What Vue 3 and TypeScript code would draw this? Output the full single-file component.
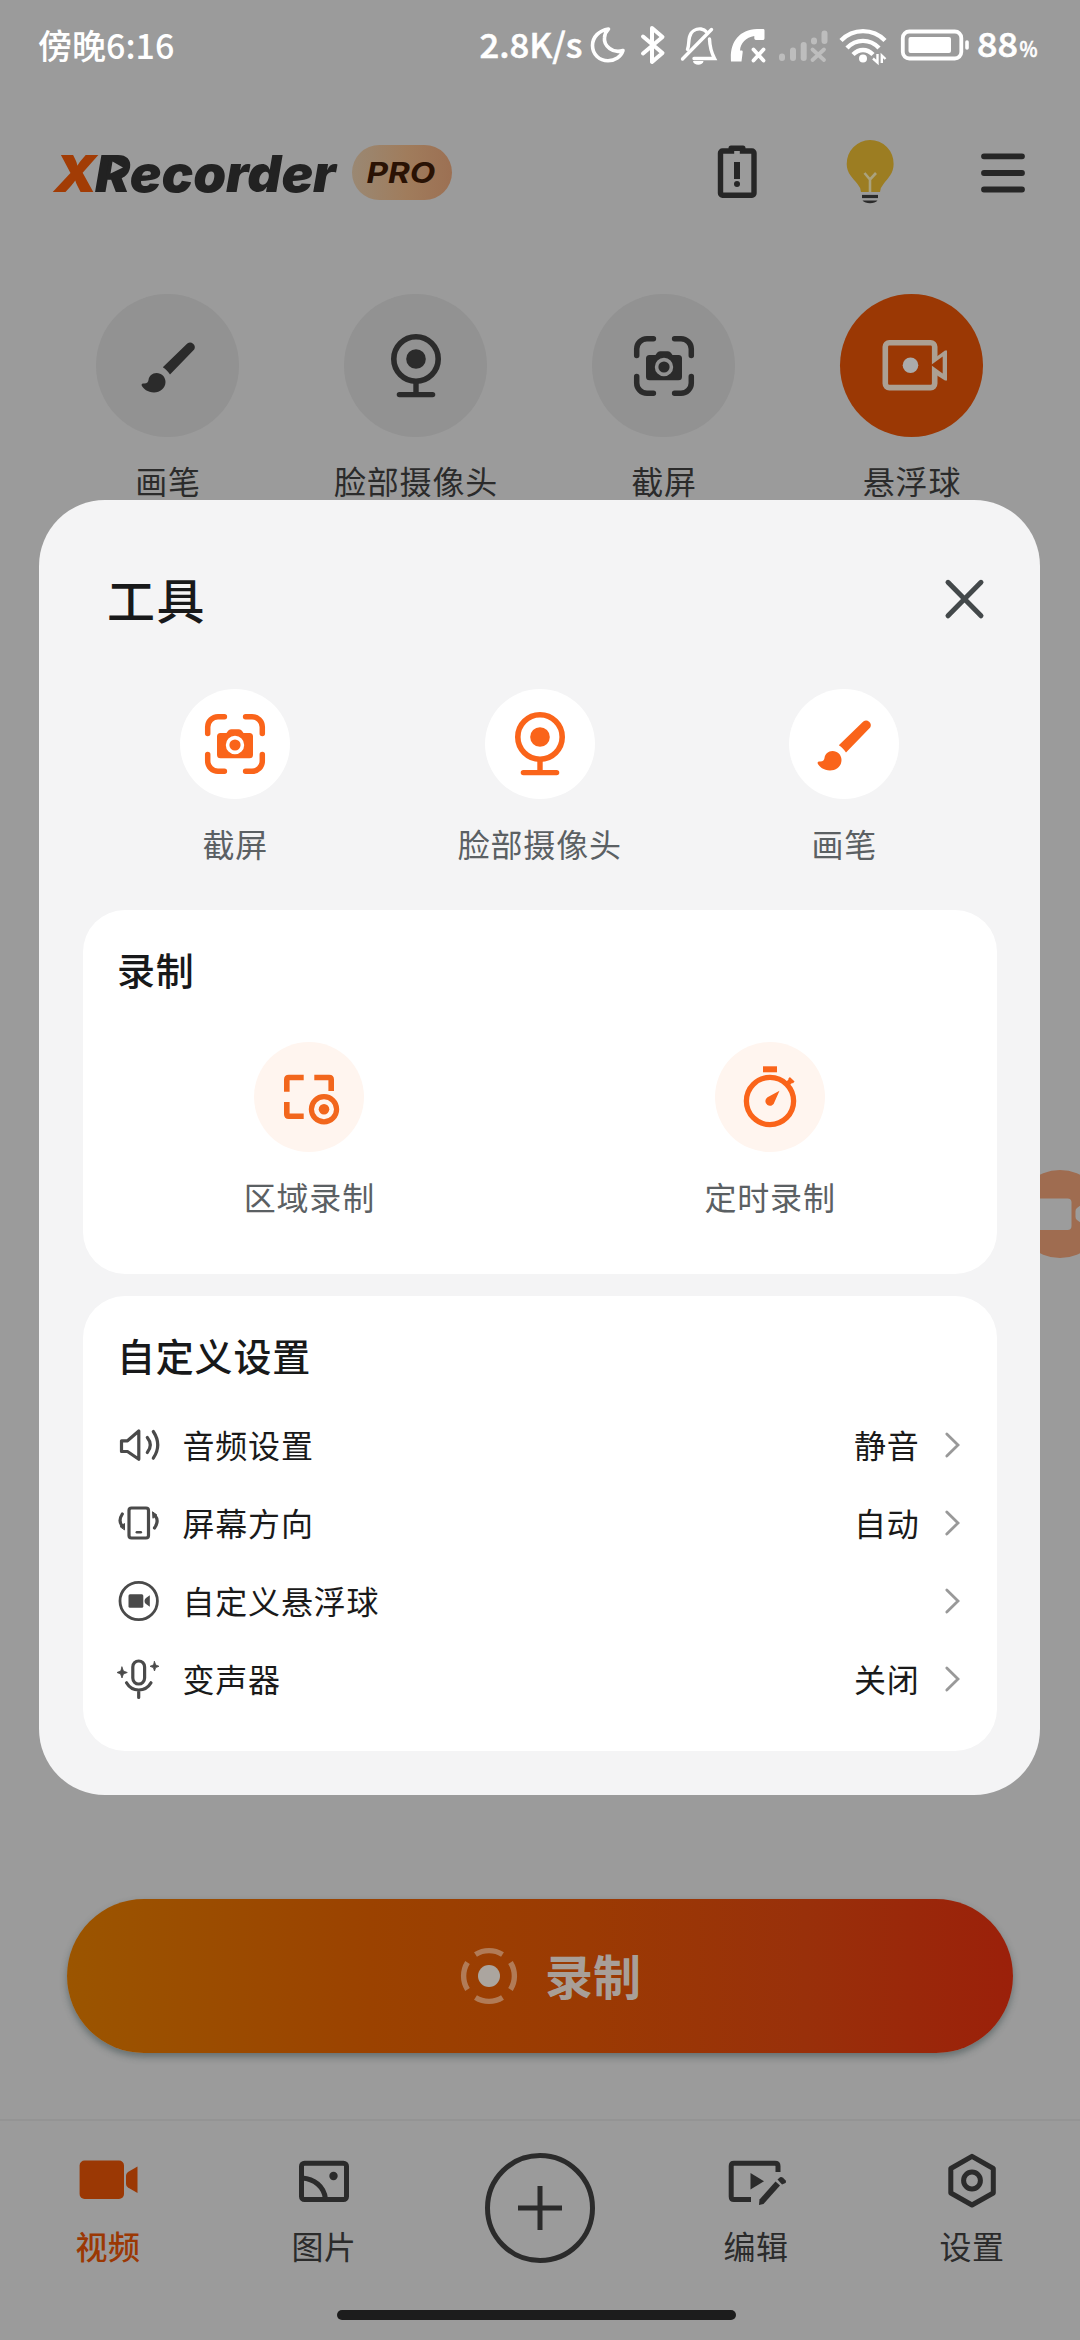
<script setup lang="ts">
type IconName = 'brush' | 'webcam' | 'capture' | 'float'

interface Tool {
  icon: IconName
  label: string
  active?: boolean
}

interface SettingRow {
  icon: 'audio' | 'rotate' | 'ball' | 'voice'
  label: string
  value: string
}

const homeTools: Tool[] = [
  { icon: 'brush', label: '画笔' },
  { icon: 'webcam', label: '脸部摄像头' },
  { icon: 'capture', label: '截屏' },
  { icon: 'float', label: '悬浮球', active: true },
]

const dialogTools: Tool[] = [
  { icon: 'capture', label: '截屏' },
  { icon: 'webcam', label: '脸部摄像头' },
  { icon: 'brush', label: '画笔' },
]

const settings: SettingRow[] = [
  { icon: 'audio', label: '音频设置', value: '静音' },
  { icon: 'rotate', label: '屏幕方向', value: '自动' },
  { icon: 'ball', label: '自定义悬浮球', value: '' },
  { icon: 'voice', label: '变声器', value: '关闭' },
]
</script>

<template>
  <div class="screen">
    <!-- shared glyphs -->
    <svg class="defs" width="0" height="0">
      <symbol id="i-capture" viewBox="-5 -5 70 70">
        <g fill="none" stroke="currentColor" stroke-width="5.5" stroke-linecap="round">
          <path d="M19.4 2.7H13A10.3 10.3 0 0 0 2.7 13V19.4" />
          <path d="M40.6 2.7H47A10.3 10.3 0 0 1 57.3 13V19.4" />
          <path d="M19.4 57.3H13A10.3 10.3 0 0 1 2.7 47V40.6" />
          <path d="M40.6 57.3H47A10.3 10.3 0 0 0 57.3 47V40.6" />
        </g>
        <path fill="currentColor" fill-rule="evenodd" d="M15.5 19H21.5C23 17 24 15.3 26.5 15.3H33.5C36 15.3 37 17 38.5 19H44.5A3.5 3.5 0 0 1 48 22.5V40.8A3.5 3.5 0 0 1 44.5 44.3H15.5A3.5 3.5 0 0 1 12 40.8V22.5A3.5 3.5 0 0 1 15.5 19ZM30 21.8A9.2 9.2 0 1 0 30 40.2A9.2 9.2 0 1 0 30 21.8Z" />
        <circle cx="30" cy="31" r="5.6" fill="currentColor" />
      </symbol>
      <symbol id="i-webcam" viewBox="-5 -3 70 70">
        <circle cx="30" cy="25" r="22.2" fill="none" stroke="currentColor" stroke-width="5.6" />
        <circle cx="30" cy="25" r="9.8" fill="currentColor" />
        <path d="M30 48V60M13.4 60.6H46.6" fill="none" stroke="currentColor" stroke-width="5.4" stroke-linecap="round" />
      </symbol>
      <symbol id="i-brush" viewBox="-8.5 -10.5 70 70">
        <path fill="currentColor" d="M21.3 25.8L45.8 2A4.7 4.7 0 0 1 52.7 8L28.5 32.9C26.3 29.8 24.5 27.8 21.3 25.8Z" />
        <path fill="currentColor" d="M0 43.6C0 42.6.8 42 2 42C5.5 42.3 6.8 40.5 7 38.5C7.5 34.5 10.8 31.6 15 31.6C20 31.6 24 35.4 24 40.6C24 47 18.5 51 12.5 51C6.2 51 1.6 47.6 0 43.6Z" />
      </symbol>
      <symbol id="i-float" viewBox="-5.5 -9 70 70">
        <rect x="2.8" y="2.8" width="49.4" height="44.8" rx="4" fill="none" stroke="#aca093" stroke-width="5.6" />
        <path fill="#aca093" d="M53 17.5L62.5 10.5H66V40.5H62.5L53 34.5Z" />
        <path fill="#9b3804" d="M48.5 25L60.2 16.5V33.6Z" />
        <circle cx="28" cy="25.3" r="7.8" fill="#ababab" />
      </symbol>
    </svg>

    <header class="status">
      <span class="time">傍晚6:16</span>
      <svg class="speed" width="104" height="36" viewBox="479 28 104 36">
        <text x="479.5" y="58" font-size="34" textLength="103" lengthAdjust="spacingAndGlyphs" fill="#fff" stroke="#fff" stroke-width="0.5">2.8K/s</text>
      </svg>
      <svg class="moon" width="36" height="38" viewBox="590 26 36 38" fill="none" stroke="#fff" stroke-width="3.6" stroke-linejoin="round">
        <path d="M608.5 29C599 30.5 592.5 37 592.5 45.5C592.5 54.5 599.5 60.7 608 60.7C615 60.7 621 56.8 623 50.5C613 54 603.5 46 604.5 37.5C604.8 34 606 31.5 608.5 29Z" />
      </svg>
      <svg class="bt" width="26" height="40" viewBox="640 25 26 40" fill="none" stroke="#fff" stroke-width="4" stroke-linejoin="round" stroke-linecap="round">
        <path d="M643 36.5L662.500 53L652 62V28L662.5 37L643 53.5" />
      </svg>
      <svg class="bell" width="36" height="40" viewBox="681 26 36 40" fill="none" stroke="#fff" stroke-width="3.4" stroke-linecap="round">
        <path d="M682.5 59L711.5 29.5" />
        <path d="M687.5 49.5C689 46 688.5 41 689.5 37C691 31 696 28.500 701 29C703 29.3 705 30 706 31.5" />
        <path d="M709.5 39C709.8 47 710.5 51 714.5 58.5H694" />
        <path fill="#fff" stroke="none" d="M693 61H703.5C703 66 693.5 66 693 61Z" />
      </svg>
      <svg class="call" width="35" height="35" viewBox="731 28 35 35">
        <path fill="#fff" d="M731 61.5C729.5 43 738 30 757 29H763C764 29 764.5 29.5 764.5 30.5V38C764.5 39.5 764 40 762.5 40H757C755.5 40 754.5 39.5 754.3 38.5V36C746 37.5 740.5 43 740 50.5H741.5C742.3 50.5 742.8 51 742.7 52L741.5 61.5Z" />
        <path d="M753.5 49.5L763.5 60.5M763.5 49.5L753.5 60.5" stroke="#fff" stroke-width="3.8" stroke-linecap="round" />
      </svg>
      <svg class="signal" width="50" height="34" viewBox="779 29 50 34" stroke="#bdbdbd" stroke-width="6" stroke-linecap="round">
        <path d="M782 58V56.5M793 58V50.5M803.7 58V45M814 41.5V40.500M824.5 41V33.500" />
        <path d="M812.5 49.5L824 60M824 49.5L812.5 60" stroke-width="3.8" />
      </svg>
      <svg class="wifi" width="48" height="36" viewBox="839 28 48 36" fill="none" stroke="#fff" stroke-width="4.4">
        <path d="M841 40.5C853 28 873 28 885 40.5" />
        <path d="M847 48C856 38.5 870 38.5 879 48" />
        <path d="M853 54.5C859 48.5 867 48.5 873 54.5" />
        <circle cx="863" cy="58.5" r="4" fill="#fff" stroke="none" />
        <path d="M877.500 54V62.500L873 58.500M881.8 63V55.5L885.5 59" stroke-width="2.4" />
      </svg>
      <svg class="battery" width="69" height="32" viewBox="901 29 69 32">
        <rect x="902.8" y="31.5" width="58.5" height="27" rx="6.5" fill="none" stroke="#fff" stroke-width="3.8" />
        <rect x="908.5" y="37" width="42.5" height="16" rx="2" fill="#fff" />
        <path d="M967 42V48" stroke="#fff" stroke-width="3.6" stroke-linecap="round" />
      </svg>
      <svg class="pct" width="62" height="36" viewBox="977 28 62 36" fill="#fff" stroke="#fff" stroke-width="0.6">
        <text x="977" y="57" font-size="34" textLength="41" lengthAdjust="spacingAndGlyphs">88</text>
        <text x="1019.5" y="57" font-size="22" textLength="18" lengthAdjust="spacingAndGlyphs">%</text>
      </svg>
    </header>

    <div class="topbar">
      <svg class="logo" width="288" height="56" viewBox="52 145 288 56">
        <text x="54" y="192" font-size="51" class="logo-t" fill="#a23c05" textLength="43" lengthAdjust="spacingAndGlyphs">X</text>
        <text x="95" y="192" font-size="51" class="logo-t" fill="#222" textLength="241" lengthAdjust="spacingAndGlyphs">Recorder</text>
        <path d="M109 160H125L123 176H106Z" fill="#222" />
        <path d="M112.5 161.500L123 167.500L110.5 173.500Z" fill="#9b9b9b" />
      </svg>
      <span class="pro">
        <svg width="72" height="26" viewBox="366 160 72 26">
          <text x="366.5" y="183" font-size="29" class="pro-t" textLength="69" lengthAdjust="spacingAndGlyphs">PRO</text>
        </svg>
      </span>
      <svg class="batt-icon" width="40" height="54" viewBox="717 145 40 54">
        <path d="M723.5 150.5H728.5V148Q728.5 145.5 731 145.5H743Q745.5 145.5 745.5 148V150.5H751" fill="#262626" />
        <rect x="720.5" y="151" width="33.5" height="44.3" rx="2" fill="none" stroke="#262626" stroke-width="5.4" />
        <rect x="734.2" y="151" width="5.6" height="4" fill="#9b9b9b" />
        <path d="M737 162V179" stroke="#262626" stroke-width="6" />
        <circle cx="737" cy="184" r="3" fill="#262626" />
      </svg>
      <svg class="bulb" width="48" height="64" viewBox="846 140 48 64">
        <path fill="#9c7d22" d="M870 140A23.5 23.5 0 0 1 893.6 164C893.6 173.5 888 178 883.5 184Q880 188 880 192H861Q861 188 857.5 184C853 178 846.7 173.5 846.7 164A23.5 23.5 0 0 1 870 140Z" />
        <path d="M864.5 173L870 179.5L876 173M870 179.5V192" fill="none" stroke="#aaa27e" stroke-width="2.6" />
        <path d="M862 196.5H878" stroke="#2a2a2a" stroke-width="3.2" />
        <path d="M862.5 200.5H877.5Q875 203.3 870 203.3Q865 203.3 862.5 200.5Z" fill="#2a2a2a" />
      </svg>
      <svg class="menu" width="44" height="40" viewBox="981 153 44 40" stroke="#262626" stroke-width="5.8" stroke-linecap="round">
        <path d="M984 156.3H1022M984 173H1022M984 189.5H1022" />
      </svg>
    </div>

    <nav class="home-tools">
      <div v-for="t in homeTools" :key="t.label" class="tool">
        <span class="disc" :class="{ active: t.active }">
          <svg width="70" height="70"><use :href="`#i-${t.icon}`" /></svg>
        </span>
        <span class="label">{{ t.label }}</span>
      </div>
    </nav>

    <div class="spacer"></div>

    <button class="record">
      <svg width="56" height="56" viewBox="-28 -28 56 56">
        <g fill="none" stroke="#b17b57" stroke-width="5.4">
          <path d="M-13.5 -21.5A25.4 25.4 0 0 1 13.5 -21.5" />
          <path d="M21.5 -13.5A25.4 25.4 0 0 1 21.5 13.5" />
          <path d="M13.5 21.5A25.4 25.4 0 0 1 -13.5 21.5" />
          <path d="M-21.5 13.5A25.4 25.4 0 0 1 -21.5 -13.5" />
        </g>
        <circle r="11" fill="#aba59f" />
      </svg>
      <span>录制</span>
    </button>

    <footer class="tabs">
      <div class="tab on">
        <svg width="60" height="56" viewBox="79 2153 60 56">
          <rect x="80.6" y="2160.5" width="44.4" height="38.5" rx="5" fill="#9b3804" />
          <path fill="#9b3804" d="M127 2175.5Q127 2173.5 129 2172L138.5 2166.5V2193L129 2187.5Q127 2186 127 2184Z" />
        </svg>
        <span>视频</span>
      </div>
      <div class="tab">
        <svg width="60" height="56" viewBox="294 2153 60 56" fill="none" stroke="#2b2b2b" stroke-width="5">
          <rect x="301.5" y="2163.2" width="45" height="36.3" rx="3" />
          <path d="M302 2178C314 2179 324 2186 325.5 2199" />
          <circle cx="333.5" cy="2176" r="4.2" fill="#2b2b2b" stroke="none" />
        </svg>
        <span>图片</span>
      </div>
      <div class="tab add">
        <svg width="112" height="112" viewBox="-56 -56 112 112" fill="none" stroke="#2b2b2b" stroke-width="5">
          <circle r="52.5" />
          <path d="M-22 0H22M0 -22V22" />
        </svg>
      </div>
      <div class="tab">
        <svg width="60" height="56" viewBox="726 2153 60 56" fill="none" stroke="#2b2b2b" stroke-width="5">
          <path d="M778 2172V2166Q778 2163.2 775 2163.2H734Q731.2 2163.2 731.2 2166V2196.5Q731.2 2199.5 734 2199.5H751" />
          <path d="M750.5 2173L764 2181.3L750.5 2189.5Z" fill="#2b2b2b" stroke="none" />
          <path fill="#2b2b2b" stroke="none" d="M759.5 2199.5L775.5 2181.5L780 2185.5L763.5 2204L759 2205Z" />
          <path fill="#2b2b2b" stroke="none" d="M777.5 2179.5L780 2177.2Q781.5 2176.5 783 2177.8L785.7 2180.5Q786.5 2182 785.5 2183L782 2184.5Z" />
        </svg>
        <span>编辑</span>
      </div>
      <div class="tab">
        <svg width="60" height="56" viewBox="942 2152.5 60 56" fill="none" stroke="#2b2b2b" stroke-width="5" stroke-linejoin="round">
          <path d="M972 2155.8L993.3 2168V2192.5L972 2204.5L950.8 2192.5V2168Z" />
          <circle cx="972" cy="2180" r="8.4" />
        </svg>
        <span>设置</span>
      </div>
      <i class="home-bar"></i>
    </footer>

    <div class="floating">
      <svg width="64" height="88" viewBox="1016 1170 64 88">
        <circle cx="1060" cy="1214" r="44" fill="#9f6c50" />
        <rect x="1030" y="1198.5" width="41.5" height="31.5" rx="4" fill="#9c9c9c" />
        <path d="M1075.5 1211Q1075.5 1209 1077 1208L1084 1203V1225L1077 1220Q1075.5 1219 1075.5 1217Z" fill="#9c9c9c" />
      </svg>
    </div>

    <section class="dialog">
      <div class="dialog-head">
        <h2>工具</h2>
        <svg width="40" height="40" viewBox="943 579 40 40" stroke="#43484a" stroke-width="5" stroke-linecap="round">
          <path d="M947 582.3L980 615.8M980 582.3L947 615.8" />
        </svg>
      </div>

      <div class="dialog-tools">
        <div v-for="t in dialogTools" :key="t.label" class="tool">
          <span class="disc"><svg width="70" height="70"><use :href="`#i-${t.icon}`" /></svg></span>
          <span class="label">{{ t.label }}</span>
        </div>
      </div>

      <div class="card rec-card">
        <h3>录制</h3>
        <div class="rec-row">
          <div class="tool">
            <span class="disc">
              <svg width="66" height="66" viewBox="276 1064 66 66" fill="none" stroke="#f2661c" stroke-width="5.6">
                <path d="M303.7 1077.5H288.8Q286.8 1077.5 286.8 1079.5V1091.7" />
                <path d="M314.3 1077.5H329.2Q331.2 1077.5 331.2 1079.5V1091" />
                <path d="M303.7 1116.3H288.8Q286.8 1116.3 286.8 1114.3V1102" />
                <circle cx="324" cy="1109.3" r="12.6" stroke-width="5.2" />
                <circle cx="324" cy="1109.3" r="5.3" fill="#f2661c" stroke="none" />
              </svg>
            </span>
            <span class="label">区域录制</span>
          </div>
          <div class="tool">
            <span class="disc">
              <svg width="66" height="66" viewBox="737 1064 66 66" fill="none" stroke="#fa641a" stroke-width="5.3">
                <circle cx="770" cy="1101" r="23.6" />
                <path d="M763 1069.3H777" stroke-width="6" />
                <path d="M786.5 1085L791.5 1080" stroke-width="5" />
                <path d="M789 1078L793.7 1082.5" stroke-width="2.5" />
                <path d="M779.5 1090.8L774.5 1102A4.6 4.6 0 1 1 767.5 1097.3Z" fill="#fa641a" stroke="none" />
              </svg>
            </span>
            <span class="label">定时录制</span>
          </div>
        </div>
      </div>

      <div class="card set-card">
        <h3>自定义设置</h3>
        <div v-for="s in settings" :key="s.label" class="row">
          <svg class="row-icon" width="42" height="42" viewBox="0 0 42 42" fill="none" stroke="#4a4a4a" stroke-width="3.2" stroke-linecap="round" stroke-linejoin="round">
            <template v-if="s.icon === 'audio'">
              <path d="M3.5 16.8H9.5L20.8 7V35.3L9.5 27.5H3.5Z" />
              <path d="M29.3 13.5Q35.3 21 29.3 28.5M35.3 7.5Q44.2 21 35.3 34.2" />
            </template>
            <template v-else-if="s.icon === 'rotate'">
              <rect x="11" y="6" width="19.5" height="30" rx="2.5" />
              <path d="M18.8 30.2H22.8" stroke-width="2.5" />
              <path d="M4.3 12Q-.2 19 4.3 24M37 13.5Q41.5 19 36.5 26" />
              <path d="M2.5 24.5L6.5 21.5V27.5ZM34.8 10L38.8 13L35.2 16Z" fill="#4a4a4a" stroke-width="1" />
            </template>
            <template v-else-if="s.icon === 'ball'">
              <circle cx="20.7" cy="21" r="18.7" stroke-width="2.8" />
              <rect x="10.5" y="14.2" width="14.8" height="13.5" rx="1.5" fill="#4a4a4a" stroke="none" />
              <path d="M26.6 20.5Q26.6 19 28 18L31.8 15.3V26.7L28 24Q26.6 23 26.6 21.5Z" fill="#4a4a4a" stroke="none" />
            </template>
            <template v-else>
              <rect x="14.8" y="3" width="11.8" height="23" rx="5.9" />
              <path d="M8.5 24.8C11.5 30 15.5 32 20.7 32S30 30 33 24.8M20.7 32V39.5" />
              <path d="M4 9L5.4 13L9.3 14.5L5.4 16L4 20L2.6 16L-1 14.5L2.6 13ZM36.5 3.5L37.7 7L41 8.3L37.7 9.6L36.5 13L35.3 9.6L32 8.3L35.3 7Z" fill="#4a4a4a" stroke="#4a4a4a" stroke-width="0.8" />
            </template>
          </svg>
          <span class="name">{{ s.label }}</span>
          <span class="value">{{ s.value }}</span>
          <svg width="15" height="26" viewBox="0 0 15 26" fill="none" stroke="#999" stroke-width="2.8" stroke-linecap="round">
            <path d="M1.8 2L13 13L1.8 24" />
          </svg>
        </div>
      </div>
    </section>
  </div>
</template>

<style>
body {
  margin: 0;
  background: #9b9b9b;
}
</style>

<style scoped>
.screen {
  position: relative;
  width: 1080px;
  height: 2340px;
  display: flex;
  flex-direction: column;
  overflow: hidden;
  background: #9b9b9b;
  color: #2b2b2b;
  font-family: 'Noto Sans CJK SC', 'Noto Sans', sans-serif;
  font-size: 32px;
}
svg {
  display: block;
  flex: none;
  overflow: visible;
}
.defs {
  position: absolute;
}
.status {
  height: 92px;
  display: flex;
  align-items: center;
  color: #fff;
  font-weight: 500;
  box-sizing: border-box;
  padding-left: 38px;
}
.time {
  width: 441px;
  font-size: 34px;
  line-height: 40px;
  margin-top: -3px;
  white-space: nowrap;
}
.moon { margin-left: 7px; margin-top: -2px; }
.bt { margin-left: 14px; margin-top: -2px; }
.bell { margin-left: 15px; }
.call { margin-left: 14px; margin-top: -1px; }
.signal { margin-left: 13px; }
.wifi { margin-left: 10px; }
.battery { margin-left: 14px; margin-top: -2px; }
.pct { margin-left: 7px; }
.topbar {
  height: 160px;
  display: flex;
  align-items: center;
  padding-left: 52px;
}
.logo-t {
  font-family: Inter, 'Open Sans', sans-serif;
  font-weight: 900;
  font-style: italic;
}
.logo { margin-top: 2px; }
.pro {
  width: 100px;
  height: 55px;
  margin-left: 12px;
  margin-top: 1px;
  border-radius: 28px;
  background: linear-gradient(90deg, #9a8873, #a07c5c 55%, #9c7053);
  display: flex;
  align-items: center;
  justify-content: center;
}
.pro-t {
  font-family: Inter, 'Open Sans', sans-serif;
  font-weight: 700;
  font-style: italic;
  fill: #2a1204;
}
.batt-icon { margin-left: 265px; }
.bulb { margin-left: 89px; }
.menu { margin-left: 87px; margin-top: 2px; }
.home-tools {
  display: flex;
  margin: 42px 0 0 43.5px;
}
.tool {
  display: flex;
  flex-direction: column;
  align-items: center;
}
.home-tools .tool {
  width: 248px;
}
.disc {
  display: flex;
  align-items: center;
  justify-content: center;
  border-radius: 50%;
}
.home-tools .disc {
  width: 143px;
  height: 143px;
  background: #929292;
}
.home-tools .disc.active {
  background: #9b3804;
}
.label {
  line-height: 40px;
  letter-spacing: 0.8px;
  white-space: nowrap;
}
.home-tools .label {
  margin-top: 23px;
  padding-left: 1px;
}
.spacer {
  flex: 1;
}
.record {
  width: 946px;
  height: 154px;
  margin: 0 0 66px 67px;
  padding: 0 0 0 22px;
  border: 0;
  border-radius: 77px;
  background: linear-gradient(90deg, #9b5500, #9b4200 32%, #9b3a03 55%, #99300a 78%, #9b200a);
  box-shadow: 0 4px 7px rgba(40, 60, 60, 0.45);
  display: flex;
  align-items: center;
  justify-content: center;
  gap: 28px;
  font: 700 48px/60px 'Noto Sans CJK SC', sans-serif;
  color: #a89f98;
}
.record span {
  margin-top: -4px;
}
.tabs {
  position: relative;
  height: 221px;
  box-sizing: border-box;
  border-top: 2px solid #949494;
  display: flex;
}
.tab {
  width: 216px;
  display: flex;
  flex-direction: column;
  align-items: center;
  padding-top: 32px;
  box-sizing: border-box;
}
.tab span {
  margin-top: 16px;
  line-height: 40px;
  letter-spacing: 0.6px;
}
.tab.on {
  color: #9b3804;
  font-weight: 500;
}
.tab.add {
  padding-top: 31px;
}
.home-bar {
  position: absolute;
  left: 337px;
  top: 189px;
  width: 399px;
  height: 10px;
  border-radius: 5px;
  background: #1c1c1c;
}
.floating {
  position: absolute;
  left: 1016px;
  top: 1170px;
}
.dialog {
  position: absolute;
  left: 39px;
  top: 500px;
  width: 1001px;
  height: 1295px;
  box-sizing: border-box;
  padding: 69px 43.5px 0 44px;
  border-radius: 66px;
  background: #f4f4f5;
}
.dialog-head {
  display: flex;
  align-items: center;
  justify-content: space-between;
  height: 60px;
  padding: 0 13px 0 24px;
}
h2,
h3 {
  margin: 0;
  font-weight: 500;
  color: #18191a;
}
h2 {
  font-size: 48px;
  line-height: 60px;
  letter-spacing: 1.5px;
  margin-top: -2px;
}
.dialog-tools {
  display: flex;
  margin-top: 60px;
}
.dialog-tools .tool {
  flex: 1;
}
.dialog .disc {
  width: 110px;
  height: 110px;
  background: #fff;
  color: #fa641a;
}
.dialog .label {
  margin-top: 24px;
  color: #5b6063;
}
.card {
  box-sizing: border-box;
  border-radius: 42px;
  background: #fff;
}
h3 {
  font-size: 38px;
  line-height: 46px;
  letter-spacing: 0.8px;
  padding-left: 34px;
}
.rec-card {
  margin-top: 47px;
  height: 364px;
  padding-top: 36px;
}
.rec-row {
  display: flex;
  margin: 50px -4px 0;
}
.rec-row .tool {
  flex: 1;
}
.rec-row .disc {
  background: #fff5ef;
}
.set-card {
  margin-top: 22px;
  height: 455px;
  padding-top: 36px;
}
.set-card h3 {
  margin-bottom: 28px;
}
.row {
  display: flex;
  align-items: center;
  height: 78px;
  padding: 0 37px 0 34.5px;
  color: #1a1a1a;
  letter-spacing: 0.8px;
}
.row .name {
  margin-left: 23px;
  flex: 1;
  line-height: 40px;
  margin-top: -3px;
}
.row .value {
  margin-right: 25px;
  line-height: 40px;
  margin-top: -3px;
}
</style>
